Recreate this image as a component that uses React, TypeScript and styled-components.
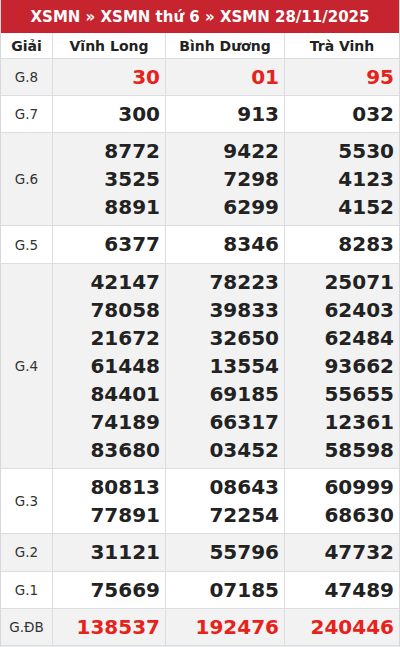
import React from "react";
import styled, { createGlobalStyle } from "styled-components";

const GlobalStyle = createGlobalStyle`
  html, body {
    margin: 0;
    padding: 0;
    background: #e9ebee;
    font-family: "DejaVu Sans", Verdana, sans-serif;
  }
`;

type Prize = {
  label: string;
  results: string[][];
  red?: boolean;
};

const provinces = ["Vĩnh Long", "Bình Dương", "Trà Vinh"];

const prizes: Prize[] = [
  { label: "G.8", results: [["30"], ["01"], ["95"]], red: true },
  { label: "G.7", results: [["300"], ["913"], ["032"]] },
  {
    label: "G.6",
    results: [
      ["8772", "3525", "8891"],
      ["9422", "7298", "6299"],
      ["5530", "4123", "4152"],
    ],
  },
  { label: "G.5", results: [["6377"], ["8346"], ["8283"]] },
  {
    label: "G.4",
    results: [
      ["42147", "78058", "21672", "61448", "84401", "74189", "83680"],
      ["78223", "39833", "32650", "13554", "69185", "66317", "03452"],
      ["25071", "62403", "62484", "93662", "55655", "12361", "58598"],
    ],
  },
  {
    label: "G.3",
    results: [
      ["80813", "77891"],
      ["08643", "72254"],
      ["60999", "68630"],
    ],
  },
  { label: "G.2", results: [["31121"], ["55796"], ["47732"]] },
  { label: "G.1", results: [["75669"], ["07185"], ["47489"]] },
  { label: "G.ĐB", results: [["138537"], ["192476"], ["240446"]], red: true },
];

export default function App() {
  return (
    <>
      <GlobalStyle />
      <Board>
        <Title>XSMN » XSMN thứ 6 » XSMN 28/11/2025</Title>
        <Row>
          <HeadCell>Giải</HeadCell>
          {provinces.map((p) => (
            <HeadCell key={p}>{p}</HeadCell>
          ))}
        </Row>
        {prizes.map((prize, i) => (
          <Row key={prize.label} $shaded={i % 2 === 0}>
            <LabelCell>{prize.label}</LabelCell>
            {prize.results.map((nums, j) => (
              <NumberCell key={j}>
                {nums.map((n, k) => (
                  <Number key={k} $red={prize.red}>
                    {n}
                  </Number>
                ))}
              </NumberCell>
            ))}
          </Row>
        ))}
      </Board>
    </>
  );
}

//******** Styles ********//

const Board = styled.div`
  width: 398px;
  border-left: 1px solid #d6d8dc;
  border-right: 1px solid #d6d8dc;
  background: #fff;
`;

const Title = styled.div`
  height: 33px;
  background: #c6242f;
  color: #fff;
  font-weight: bold;
  font-size: 15px;
  display: flex;
  align-items: center;
  justify-content: center;
`;

const Row = styled.div<{ $shaded?: boolean }>`
  display: grid;
  grid-template-columns: 51px 113px 119px 115px;
  background: ${(p) => (p.$shaded ? "#f2f2f3" : "#fff")};
  border-bottom: 1px solid #dcdde0;
  & > * + * {
    border-left: 1px solid #dcdde0;
  }
`;

const HeadCell = styled.div`
  height: 25px;
  display: flex;
  align-items: center;
  justify-content: center;
  font-weight: bold;
  font-size: 14px;
  color: #222;
`;

const LabelCell = styled.div`
  display: flex;
  align-items: center;
  justify-content: center;
  font-size: 13.5px;
  color: #333;
`;

const NumberCell = styled.div`
  display: flex;
  flex-direction: column;
  align-items: flex-end;
  padding: 4px 5px;
`;

const Number = styled.div<{ $red?: boolean }>`
  font-size: 20px;
  line-height: 28.1px;
  font-weight: bold;
  color: ${(p) => (p.$red ? "#e5231b" : "#222")};
`;
